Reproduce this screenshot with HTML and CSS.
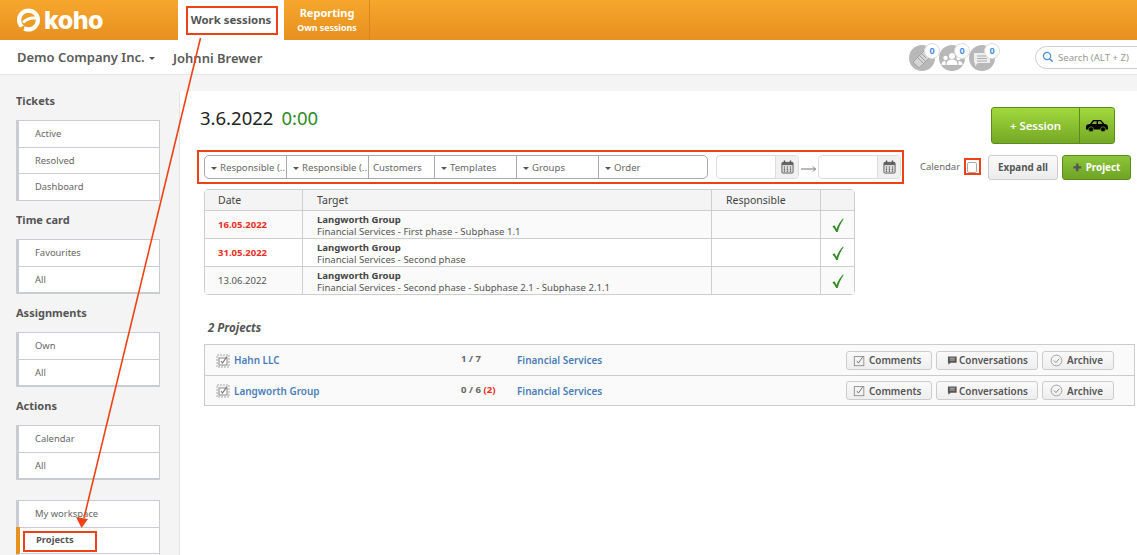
FILE: index.html
```html
<!DOCTYPE html>
<html lang="en">
<head>
<meta charset="utf-8">
<title>Koho</title>
<link rel="stylesheet" href="styles.css">
</head>
<body>
<svg class="defs" width="0" height="0">
  <symbol id="cal" viewBox="0 0 14 15">
    <rect x="1" y="2.5" width="12" height="11.5" rx="1" fill="#e8e8e8" stroke="#555" stroke-width="1"/>
    <rect x="1" y="2.5" width="12" height="3" fill="#666"/>
    <rect x="3" y="0.5" width="1.6" height="3.5" fill="#555"/><rect x="9.4" y="0.5" width="1.6" height="3.5" fill="#555"/>
    <path d="M3 7.5h1.5M6.2 7.5h1.5M9.5 7.5h1.5M3 9.7h1.5M6.2 9.7h1.5M9.5 9.7h1.5M3 11.9h1.5M6.2 11.9h1.5M9.5 11.9h1.5" stroke="#444" stroke-width="1.3"/>
  </symbol>
  <symbol id="chk" viewBox="0 0 14 16">
    <path d="M1.500 9.500L3.700 8.300 6 12.300C7.500 8 10 4 13 1L13.600 1.500C10.500 6 8.500 10.500 7.200 15.500H5.500C4.600 13 3.200 11 1.500 9.500z" fill="#2e8b1f"/>
  </symbol>
  <symbol id="task" viewBox="0 0 15 15">
    <rect x="1" y="2" width="12" height="12" fill="#f4f4f4" stroke="#aaa" stroke-dasharray="2 1"/>
    <rect x="3" y="5" width="8" height="7" fill="#fff" stroke="#888"/>
    <path d="M5 8l1.500 2L11 3.500" fill="none" stroke="#777" stroke-width="1.200"/>
  </symbol>
  <symbol id="cmt" viewBox="0 0 15 15">
    <rect x="1.5" y="3" width="11" height="10.5" fill="none" stroke="#8a8a8a"/>
    <path d="M4.500 8l1.700 2.500L11.500 3" fill="none" stroke="#777" stroke-width="1.100"/>
  </symbol>
  <symbol id="conv" viewBox="0 0 12 12">
    <path d="M1 1.500h9.500v7H4L1.500 10.500V8.500H1z" fill="#555"/><path d="M3 3.500h5.500M3 5.500h5.500" stroke="#ddd" stroke-width=".8"/>
  </symbol>
  <symbol id="arch" viewBox="0 0 14 14">
    <circle cx="7" cy="7" r="5.800" fill="none" stroke="#999"/>
    <path d="M4.200 7l2.200 2.300 3.600-4.300" fill="none" stroke="#888"/>
  </symbol>
</svg>

<div class="page">
  <header class="topbar">
    <div class="brand">
      <svg class="brand-mark" viewBox="0 0 26 26">
        <circle cx="12.500" cy="13" r="9.400" fill="none" stroke="#fff" stroke-width="4.200"/>
        <path d="M7 15.500C10.500 12 15 10.500 20 11" fill="none" stroke="#fff" stroke-width="3"/>
        <path d="M3 21l6-3-2 7z" fill="#ed9926"/>
      </svg>
      <span class="brand-name">koho</span>
    </div>
    <nav class="tabs">
      <a class="tab tab-active">Work sessions</a>
      <a class="tab tab-report"><span class="tab-title">Reporting</span><span class="tab-sub">Own sessions</span></a>
    </nav>
  </header>

  <div class="subbar">
    <span class="company">Demo Company Inc.<i class="caret caret-big"></i></span>
    <span class="person">Johnni Brewer</span>
    <div class="notifs">
      <div class="notif">
        <svg viewBox="0 0 26 26"><circle cx="13" cy="13" r="13" fill="#b8b8b8"/><path d="M4 17L16 5l6 6-12 12z" fill="#d4d4d4" stroke="#a4a4a4"/><path d="M9 13l5 5M11 11l5 5M13 9l4 4" stroke="#a4a4a4"/></svg>
        <b class="badge">0</b>
      </div>
      <div class="notif">
        <svg viewBox="0 0 26 26"><circle cx="13" cy="13" r="13" fill="#b8b8b8"/><circle cx="13" cy="11" r="3" fill="#fff"/><path d="M7.500 20c0-4 2-5.500 5.500-5.500s5.500 1.500 5.500 5.500z" fill="#fff"/><circle cx="6.500" cy="13" r="2.200" fill="#fff"/><circle cx="19.500" cy="13" r="2.200" fill="#fff"/><path d="M2.500 20c0-3 1.500-4 4-4v4zM23.500 20c0-3-1.500-4-4-4v4z" fill="#fff"/></svg>
        <b class="badge">0</b>
      </div>
      <div class="notif">
        <svg viewBox="0 0 26 26"><circle cx="13" cy="13" r="13" fill="#b8b8b8"/><path d="M5 8h16v10H9l-3 3v-3H5z" fill="#eee"/><path d="M8 11h10M8 13.500h10M8 16h10" stroke="#aaa"/></svg>
        <b class="badge">0</b>
      </div>
    </div>
    <label class="search">
      <svg viewBox="0 0 12 12"><circle cx="5" cy="5" r="3.600" fill="none" stroke="#4a90d9" stroke-width="1.200"/><path d="M7.700 7.700l3 3" stroke="#4a90d9" stroke-width="1.400"/></svg>
      <span>Search (ALT + Z)</span>
    </label>
  </div>

  <div class="body">
    <aside class="sidebar">
      <h3>Tickets</h3>
      <ul class="menu"><li>Active</li><li>Resolved</li><li>Dashboard</li></ul>
      <h3>Time card</h3>
      <ul class="menu menu-thick"><li>Favourites</li><li>All</li></ul>
      <h3>Assignments</h3>
      <ul class="menu menu-thick"><li>Own</li><li>All</li></ul>
      <h3>Actions</h3>
      <ul class="menu menu-thick"><li>Calendar</li><li>All</li></ul>
      <ul class="menu menu-last"><li>My workspace</li><li class="current">Projects</li><li></li></ul>
    </aside>

    <main class="panel">
      <div class="title-row">
        <h1>3.6.2022<span class="hours">0:00</span></h1>
        <div class="session">
          <span class="session-main">+ Session</span>
          <span class="session-car">
            <svg viewBox="0 0 24 13"><path d="M1 7.500c0-1.500 1.500-2.300 4-2.600L8 1h8l3.500 4c2.500.3 3.500 1.300 3.500 3v2.500H1z" fill="#000"/><path d="M9 2.200h2.600v2.800H6.700zM13 2.200h2.500l2 2.800H13z" fill="#7db32f"/><circle cx="6" cy="10.300" r="2.500" fill="#000" stroke="#7db32f" stroke-width=".7"/><circle cx="18" cy="10.300" r="2.500" fill="#000" stroke="#7db32f" stroke-width=".7"/></svg>
          </span>
        </div>
      </div>

      <div class="filter-row">
        <div class="filters">
          <span class="seg seg-a"><i class="caret"></i>Responsible (..</span>
          <span class="seg seg-a"><i class="caret"></i>Responsible (..</span>
          <span class="seg seg-c">Customers</span>
          <span class="seg seg-a"><i class="caret"></i>Templates</span>
          <span class="seg seg-a"><i class="caret"></i>Groups</span>
          <span class="seg seg-o"><i class="caret"></i>Order</span>
        </div>
        <div class="dates">
          <div class="date"><span class="date-input"></span><span class="date-btn"><svg><use href="#cal"/></svg></span></div>
          <svg class="date-arrow" viewBox="0 0 16 8"><path d="M0 4h14.500M12 1.500l2.500 2.500L12 6.500" fill="none" stroke="#777"/></svg>
          <div class="date"><span class="date-input"></span><span class="date-btn"><svg><use href="#cal"/></svg></span></div>
        </div>
        <span class="cal-label">Calendar</span>
        <span class="checkbox"></span>
        <button class="btn-expand">Expand all</button>
        <button class="btn-project"><span class="plus">✚</span>Project</button>
      </div>

      <table class="sessions">
        <thead><tr><th class="c-date">Date</th><th class="c-target">Target</th><th class="c-resp">Responsible</th><th class="c-ok"></th></tr></thead>
        <tbody>
          <tr><td class="late">16.05.2022</td><td><b>Langworth Group</b><br>Financial Services - First phase - Subphase 1.1</td><td></td><td class="ok"><svg><use href="#chk"/></svg></td></tr>
          <tr><td class="late">31.05.2022</td><td><b>Langworth Group</b><br>Financial Services - Second phase</td><td></td><td class="ok"><svg><use href="#chk"/></svg></td></tr>
          <tr><td>13.06.2022</td><td><b>Langworth Group</b><br>Financial Services - Second phase - Subphase 2.1 - Subphase 2.1.1</td><td></td><td class="ok"><svg><use href="#chk"/></svg></td></tr>
        </tbody>
      </table>

      <h2 class="count-title">2 Projects</h2>
      <div class="projects">
        <div class="project">
          <svg class="p-icon"><use href="#task"/></svg>
          <a class="p-name">Hahn LLC</a>
          <span class="p-count">1 / 7</span>
          <a class="p-service">Financial Services</a>
          <div class="p-actions">
            <button class="act act-c"><svg><use href="#cmt"/></svg>Comments</button>
            <button class="act act-v"><svg class="s"><use href="#conv"/></svg>Conversations</button>
            <button class="act act-a"><svg><use href="#arch"/></svg>Archive</button>
          </div>
        </div>
        <div class="project">
          <svg class="p-icon"><use href="#task"/></svg>
          <a class="p-name">Langworth Group</a>
          <span class="p-count">0 / 6 <em>(2)</em></span>
          <a class="p-service">Financial Services</a>
          <div class="p-actions">
            <button class="act act-c"><svg><use href="#cmt"/></svg>Comments</button>
            <button class="act act-v"><svg class="s"><use href="#conv"/></svg>Conversations</button>
            <button class="act act-a"><svg><use href="#arch"/></svg>Archive</button>
          </div>
        </div>
      </div>
    </main>
  </div>

  <svg class="marks" viewBox="0 0 1137 555">
    <g fill="none" stroke="#ee4216" stroke-width="2">
      <rect x="187" y="7" width="90" height="27"/>
      <rect x="198" y="151" width="705" height="32"/>
      <rect x="965" y="159" width="15" height="15"/>
      <rect x="24" y="532" width="72" height="19"/>
      <path d="M200.500 38L84 518" stroke-width="1.600"/>
    </g>
    <path d="M81.500 528L76 517l12 2z" fill="#ee4216"/>
  </svg>
</div>
</body>
</html>
```
FILE: styles.css
```css
* { box-sizing: border-box; }
html, body { margin: 0; height: 100%; overflow: hidden; }
body { font-family: "Noto Sans", sans-serif; color: #555; background: #f4f4f4; }
.defs { position: absolute; }
.page { position: relative; width: 1137px; height: 555px; overflow: hidden; display: flex; flex-direction: column; }

.topbar { height: 40px; flex: none; display: flex; background: linear-gradient(#f6a72c, #e79021); }
.brand { width: 178px; display: flex; align-items: center; padding-left: 16px; gap: 2px; }
.brand-mark { width: 26px; height: 26px; }
.brand-name { font-family: "Inter", sans-serif; font-weight: 800; font-size: 25px; line-height: 26px; color: #fff; letter-spacing: -0.5px; }
.tabs { display: flex; }
.tab { display: flex; flex-direction: column; align-items: center; justify-content: center; }
.tab-active { width: 106px; background: #fff; color: #555; font-weight: 700; font-size: 11.400px; padding-bottom: 1px; }
.tab-report { width: 85px; margin-left: 1px; border-right: 1px solid #d9861c; color: #fff; font-weight: 700; }
.tab-title { font-size: 11px; line-height: 15px; }
.tab-sub { font-size: 8.800px; line-height: 16px; }

.subbar { height: 35px; flex: none; background: #fff; border-bottom: 1px solid #e6e6e6; display: flex; align-items: center; padding-left: 17px; }
.company { font-weight: 600; font-size: 13px; color: #5a5a5a; width: 156px; flex: none; }
.person { font-weight: 600; font-size: 13px; color: #5a5a5a; padding-top: 2px; width: 736px; flex: none; }
.caret { display: inline-block; width: 0; height: 0; border: 3px solid transparent; border-top-color: #555; border-bottom-width: 0; margin-right: 3px; vertical-align: middle; }
.caret-big { border-width: 3.500px 3.500px 0; margin: 0 0 0 4px; }
.notifs { display: flex; gap: 4px; margin-right: 40px; flex: none; }
.notif { position: relative; width: 26px; height: 26px; margin-top: 2px; }
.notif svg { display: block; width: 26px; height: 26px; }
.badge { position: absolute; right: -5px; top: -2px; width: 16px; height: 16px; border-radius: 50%; background: #fff; border: 1px solid #ddd; font-size: 9px; line-height: 13px; text-align: center; color: #4a90d9; }
.search { flex: none; width: 130px; height: 23px; border: 1px solid #ccc; border-radius: 12px; display: flex; align-items: center; gap: 4px; padding-left: 6px; font-size: 9.600px; color: #999; white-space: nowrap; }
.search svg { width: 12px; height: 12px; }

.body { flex: 1; display: flex; min-height: 0; padding-top: 16px; }
.sidebar { width: 179px; flex: none; margin-top: -16px; padding: 18px 0 0 16px; }
.sidebar h3 { margin: 0; font-size: 11px; line-height: 16px; font-weight: 700; color: #555; height: 27px; }
.menu { list-style: none; margin: 0 0 11px; padding: 0 0 1px; width: 144px; background: #fff; border: 1px solid #c9ccd2; border-left-width: 3px; }
.menu-thick { padding-bottom: 0; border-bottom-width: 2px; }
.menu li { height: 26px; padding-left: 16px; font-size: 9.400px; line-height: 25px; color: #666; border-top: 1px solid #c9ccd2; position: relative; }
.menu li:first-child { border-top: 0; }
.menu-last { margin-top: 20px; }
.menu .current { font-weight: 700; color: #555; padding-left: 17px; line-height: 23px; }
.current::before { content: ""; position: absolute; left: -3px; top: -1px; bottom: -1px; width: 4px; background: #e8921e; }

.panel { flex: 1; min-width: 0; background: #fff; border-left: 1px solid #e4e4e4; border-radius: 3px 0 0 0; padding: 16px 0 0 21px; }
.title-row { display: flex; justify-content: space-between; padding-right: 22px; height: 48px; }
h1 { margin: 0 0 0 -1px; font-weight: 400; font-size: 18.500px; line-height: 22px; color: #222; }
.hours { color: #2e8b1f; margin-left: 8px; }
.session { display: flex; width: 124px; height: 37px; border: 1px solid #5d8a1c; border-radius: 3px; background: linear-gradient(#a2d83c, #74a826); color: #fff; font-weight: 600; font-size: 11.400px; }
.session-main { width: 88px; display: flex; align-items: center; justify-content: center; border-right: 1px solid #5d8a1c; }
.session-car { flex: 1; display: flex; align-items: center; justify-content: center; }
.session-car svg { width: 24px; height: 13px; }

.filter-row { display: flex; align-items: flex-start; padding-left: 3px; height: 34px; }
.filters { display: flex; width: 504px; height: 24px; border: 1px solid #aaa; border-radius: 5px; font-size: 9.600px; line-height: 24px; color: #666; flex: none; }
.seg { display: block; white-space: nowrap; overflow: hidden; border-right: 1px solid #aaa; padding-left: 6px; }
.seg-a { width: 82px; }
.seg-c { width: 66px; padding-left: 4px; }
.seg-o { flex: 1; border-right: 0; }
.dates { display: flex; margin-left: 8px; flex: none; width: 184px; }
.date { display: flex; width: 83px; height: 24px; border: 1px solid #ddd; border-radius: 4px; overflow: hidden; flex: none; }
.date-input { width: 59px; border-right: 1px solid #ddd; }
.date-btn { flex: 1; background: #f1f1f1; display: flex; align-items: center; justify-content: center; }
.date-btn svg { width: 13px; height: 14px; }
.date-arrow { width: 16px; height: 8px; margin: 10px 1px 0 2px; flex: none; }
.cal-label { font-size: 9.500px; line-height: 24px; color: #666; margin-left: 20px; width: 47px; flex: none; }
.checkbox { width: 10px; height: 11px; margin: 7px 1px 0 0; border: 1px solid #aaa; border-radius: 2px; background: #fff; flex: none; }
button { font-family: inherit; padding: 0; margin: 0; }
.btn-expand { width: 70px; height: 25px; margin-left: 10px; border: 1px solid #ccc; border-radius: 3px; background: linear-gradient(#fafafa, #ececec); color: #555; font-size: 9.800px; font-weight: 700; flex: none; }
.btn-project { width: 69px; height: 25px; margin-left: 4px; border: 1px solid #5d8a1c; border-radius: 3px; background: linear-gradient(#8cc63a, #6ea325); color: #fff; font-size: 9.800px; font-weight: 700; flex: none; }
.plus { color: #555; margin-right: 5px; }

.sessions { width: 651px; margin-left: 3px; border-collapse: separate; border-spacing: 0; border: 1px solid #ccced2; border-radius: 4px; table-layout: fixed; font-size: 9.550px; color: #555; }
.sessions th { height: 20px; font-weight: 400; font-size: 10.500px; line-height: 12px; text-align: left; background: #f4f4f4; padding: 0 0 0 14px; border-right: 1px solid #ccced2; color: #444; }
.sessions td { height: 28px; padding: 1px 0 0 14px; line-height: 12px; border-top: 1px solid #ccced2; border-right: 1px solid #ccced2; vertical-align: middle; }
.sessions td:nth-child(2) { padding-top: 3px; }
.sessions th:first-child, .sessions td:first-child { padding-left: 13px; }
.sessions th:last-child, .sessions td:last-child { border-right: 0; }
.sessions tbody tr:nth-child(odd) td { background: #fafafa; }
.sessions b { color: #444; }
.c-date { width: 98px; }
.c-resp { width: 109px; }
.c-ok { width: 33px; }
.sessions .late { color: #ee2d1f; font-weight: 700; }
.sessions .ok { padding: 0; text-align: center; }
.ok svg { width: 13px; height: 16px; display: block; margin: 0 auto; }

.count-title { margin: 25px 0 8px 7px; font-size: 11.500px; line-height: 16px; font-weight: 700; font-style: italic; color: #555; }
.projects { margin-left: 3px; width: 931px; border: 1px solid #ccc; background: #fafafa; font-size: 9.950px; font-weight: 600; }
.project { height: 30px; display: flex; align-items: center; border-top: 1px solid #ccc; }
.project:first-child { border-top: 0; }
.p-icon { width: 15px; height: 15px; margin-left: 11px; flex: none; }
.p-name { color: #4a7db8; width: 230px; padding-left: 3px; flex: none; }
.p-count { width: 56px; font-size: 9.600px; font-weight: 700; color: #666; flex: none; margin-bottom: 3px; }
.p-count em { color: #ee2d1f; font-style: normal; }
.p-service { color: #4a7db8; flex: none; width: 329px; }
.p-actions { display: flex; gap: 4px; }
.act { height: 19px; border: 1px solid #ccc; border-radius: 3px; background: linear-gradient(#fafafa, #eee); color: #555; font-size: 9.900px; font-weight: 600; display: flex; align-items: center; gap: 3px; }
.act svg { width: 13px; height: 13px; }
.act svg.s { width: 11px; height: 11px; margin-right: -2px; }
.act-c { width: 86px; padding-left: 6px; }
.act-v { width: 102px; padding-left: 10px; }
.act-a { width: 72px; padding-left: 7px; }
.act-a svg { margin-right: 1px; }

.marks { position: absolute; left: 0; top: 0; width: 1137px; height: 555px; pointer-events: none; }
```
